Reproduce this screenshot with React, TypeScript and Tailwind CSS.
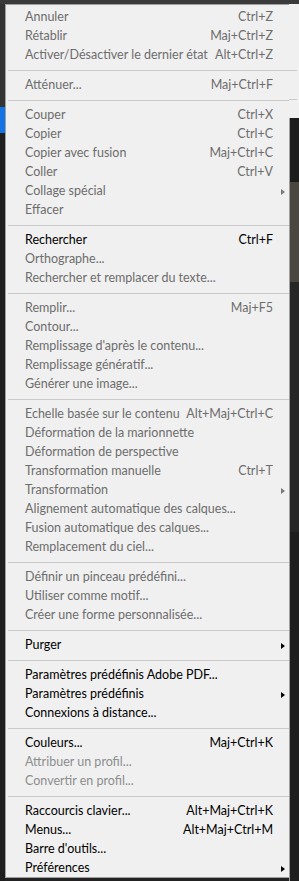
import React from "react";

type Item = { l: string; s?: string; on?: boolean; dim?: boolean; sub?: boolean };

const groups: Item[][] = [
  [
    { l: "Annuler", s: "Ctrl+Z" },
    { l: "Rétablir", s: "Maj+Ctrl+Z" },
    { l: "Activer/Désactiver le dernier état", s: "Alt+Ctrl+Z" },
  ],
  [{ l: "Atténuer...", s: "Maj+Ctrl+F" }],
  [
    { l: "Couper", s: "Ctrl+X" },
    { l: "Copier", s: "Ctrl+C" },
    { l: "Copier avec fusion", s: "Maj+Ctrl+C" },
    { l: "Coller", s: "Ctrl+V" },
    { l: "Collage spécial", sub: true },
    { l: "Effacer" },
  ],
  [
    { l: "Rechercher", s: "Ctrl+F", on: true },
    { l: "Orthographe..." },
    { l: "Rechercher et remplacer du texte..." },
  ],
  [
    { l: "Remplir...", s: "Maj+F5" },
    { l: "Contour..." },
    { l: "Remplissage d'après le contenu..." },
    { l: "Remplissage génératif..." },
    { l: "Générer une image..." },
  ],
  [
    { l: "Echelle basée sur le contenu", s: "Alt+Maj+Ctrl+C" },
    { l: "Déformation de la marionnette" },
    { l: "Déformation de perspective" },
    { l: "Transformation manuelle", s: "Ctrl+T" },
    { l: "Transformation", sub: true },
    { l: "Alignement automatique des calques..." },
    { l: "Fusion automatique des calques..." },
    { l: "Remplacement du ciel..." },
  ],
  [
    { l: "Définir un pinceau prédéfini..." },
    { l: "Utiliser comme motif..." },
    { l: "Créer une forme personnalisée..." },
  ],
  [{ l: "Purger", on: true, sub: true }],
  [
    { l: "Paramètres prédéfinis Adobe PDF...", on: true },
    { l: "Paramètres prédéfinis", on: true, sub: true },
    { l: "Connexions à distance...", on: true },
  ],
  [
    { l: "Couleurs...", s: "Maj+Ctrl+K", on: true },
    { l: "Attribuer un profil...", dim: true },
    { l: "Convertir en profil...", dim: true },
  ],
  [
    { l: "Raccourcis clavier...", s: "Alt+Maj+Ctrl+K", on: true },
    { l: "Menus...", s: "Alt+Maj+Ctrl+M", on: true },
    { l: "Barre d'outils...", on: true },
    { l: "Préférences", on: true, sub: true },
  ],
];

function Row({ it }: { it: Item }) {
  const color = it.on ? "text-black" : it.dim ? "text-[#8d8d8d]" : "text-[#6d6d6d]";
  return (
    <div className={`flex h-[19px] items-center pl-[19px] pt-[2px] ${color}`}>
      <span className="flex-1 whitespace-nowrap">{it.l}</span>
      {it.s && <span className="whitespace-nowrap">{it.s}</span>}
      <span className="flex w-[16px] items-center pl-[8px]">
        {it.sub && (
          <span
            className={`h-0 w-0 border-y-[3.5px] border-l-[4px] border-y-transparent ${
              it.on ? "border-l-black" : "border-l-[#7a7a7a]"
            }`}
          />
        )}
      </span>
    </div>
  );
}

function Sep() {
  return (
    <div className="h-[11px] pl-[2px] pt-[6px]">
      <div className="h-px bg-[#cacaca]" />
    </div>
  );
}

export default function App() {
  return (
    <div className="flex h-[881px] w-[299px] overflow-hidden bg-[#2a2a2a] font-['Lato',sans-serif] text-[12.5px] leading-none">
      {/* left strip, the app behind */}
      <div className="flex w-[5px] flex-col bg-[#262626]">
        <div className="h-[4px] bg-[#3a3a3a]" />
        <div className="h-[103px] bg-[#333333]" />
        <div className="h-[26px] bg-[#1473e6]" />
        <div className="flex-1 bg-[#1e1e1e]" />
      </div>

      {/* menu */}
      <div className="flex w-[284px] flex-col">
        <div className="h-[4px] bg-[#3a3a3a]" />
        <div className="border-b border-l border-t border-[#a0a0a0] bg-[#f0f0f0] pt-[2px]">
          {groups.map((g, gi) => (
            <div key={gi}>
              {gi > 0 && <Sep />}
              {g.map((it) => (
                <Row key={it.l} it={it} />
              ))}
            </div>
          ))}
        </div>
        <div className="flex-1 bg-[#222222]" />
      </div>

      {/* right strip */}
      <div className="flex w-[10px] flex-col">
        <div className="h-[4px] bg-[#3a3a3a]" />
        <div className="flex h-[114px] flex-col bg-[#f0f0f0] pr-[2px]">
          <div className="h-[66px]" />
          <div className="h-px bg-[#cacaca]" />
          <div className="h-[28px]" />
          <div className="h-px bg-[#cacaca]" />
        </div>
        <div className="flex flex-1">
          <div className="w-px bg-[#a0a0a0]" />
          <div className="flex flex-1 flex-col bg-[#1c1c1c]">
            <div className="h-[64px]" />
            <div className="h-[100px] bg-[#4a4640]" />
            <div className="h-[250px] bg-[#262626]" />
            <div className="flex-1 bg-[#1e1e1e]" />
          </div>
        </div>
      </div>
    </div>
  );
}
